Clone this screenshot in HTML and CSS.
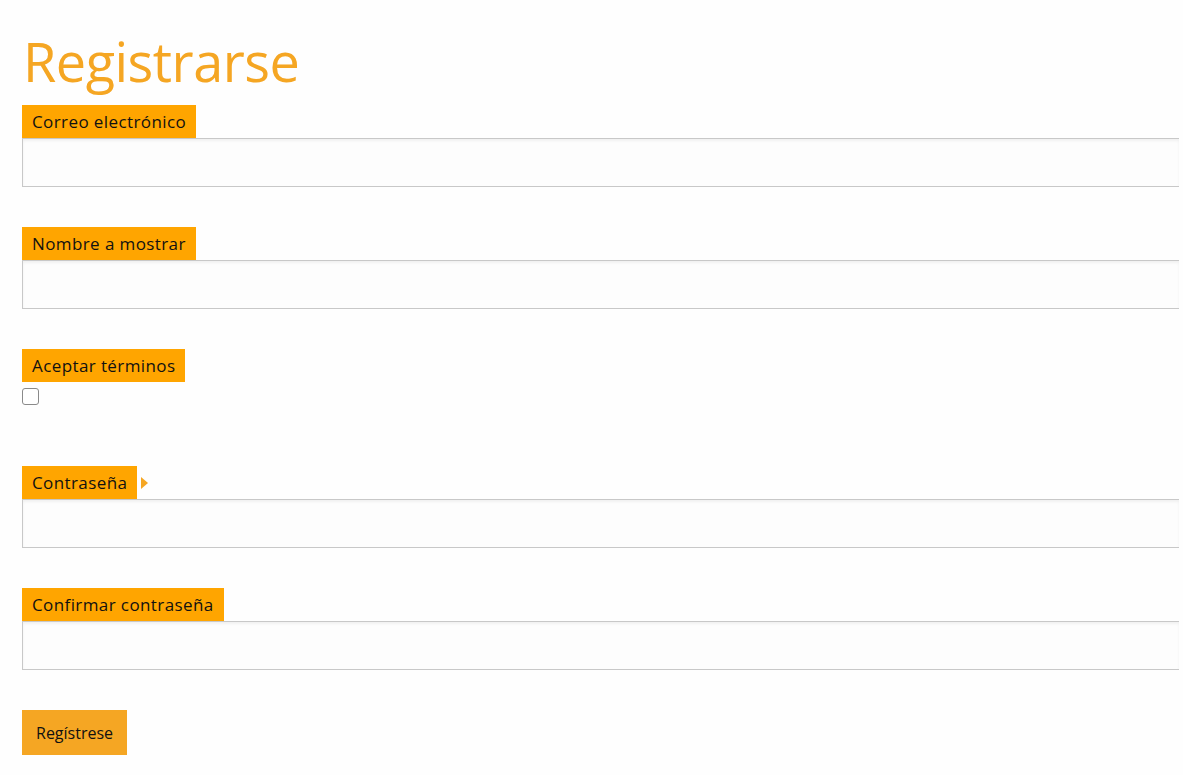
FILE: index.html
```html
<!DOCTYPE html>
<html lang="es">
<head>
<meta charset="utf-8">
<title>Registrarse</title>
<link rel="stylesheet" href="styles.css">
</head>
<body>
<main class="page">
  <h1 class="title">Registrarse</h1>
  <form class="form">
    <div class="field">
      <div class="label-row"><label class="label" for="email">Correo electrónico</label></div>
      <input class="input" id="email" type="email">
    </div>
    <div class="field">
      <div class="label-row"><label class="label" for="name">Nombre a mostrar</label></div>
      <input class="input" id="name" type="text">
    </div>
    <div class="field field-check">
      <div class="label-row"><label class="label" for="terms">Aceptar términos</label></div>
      <input class="check" id="terms" type="checkbox">
    </div>
    <div class="field">
      <div class="label-row"><label class="label" for="pw">Contraseña</label><span class="arrow"></span></div>
      <input class="input" id="pw" type="password">
    </div>
    <div class="field">
      <div class="label-row"><label class="label" for="pw2">Confirmar contraseña</label></div>
      <input class="input" id="pw2" type="password">
    </div>
    <button class="button" type="button">Regístrese</button>
  </form>
</main>
</body>
</html>
```
FILE: styles.css
```css
html, body {
  margin: 0;
  padding: 0;
  background: #fefefe;
  overflow: hidden;
}
body {
  font-family: "Open Sans", "Noto Sans", sans-serif;
  color: #111;
}
.page {
  padding: 26px 0 0 22px;
}
.title {
  margin: 0 0 0 1px;
  font-size: 54px;
  font-weight: 400;
  line-height: 70px;
  color: #f5a623;
  letter-spacing: -0.5px;
}
.form {
  margin-top: 9px;
  display: flex;
  flex-direction: column;
  align-items: flex-start;
}
.field {
  display: flex;
  flex-direction: column;
  align-items: flex-start;
  margin-bottom: 40px;
}
.label-row {
  display: flex;
  align-items: center;
}
.label {
  background: #ffa500;
  font-size: 17px;
  letter-spacing: 0.4px;
  line-height: 33px;
  height: 33px;
  padding: 0 10px;
  color: #111;
}
.arrow {
  width: 0;
  height: 0;
  margin-left: 4px;
  border-top: 6px solid transparent;
  border-bottom: 6px solid transparent;
  border-left: 7px solid #f5a623;
}
.input {
  box-sizing: border-box;
  width: 1157px;
  height: 49px;
  margin: 0;
  border: 1px solid #c8c8c8;
  border-right: none;
  background: #fdfdfd;
  box-shadow: inset 0 2px 3px rgba(0,0,0,0.05);
  outline: none;
}
.field-check {
  margin-bottom: 61px;
}
.check {
  appearance: none;
  -webkit-appearance: none;
  box-sizing: border-box;
  width: 17px;
  height: 17px;
  margin: 6px 0 0 0;
  border: 1px solid #8a8a8a;
  border-radius: 3px;
  background: #fff;
}
.button {
  font-family: "Open Sans", "Noto Sans", sans-serif;
  font-size: 16px;
  color: #111;
  background: #f5a623;
  border: none;
  height: 45px;
  padding: 0 14px;
  margin: 0;
}
```
